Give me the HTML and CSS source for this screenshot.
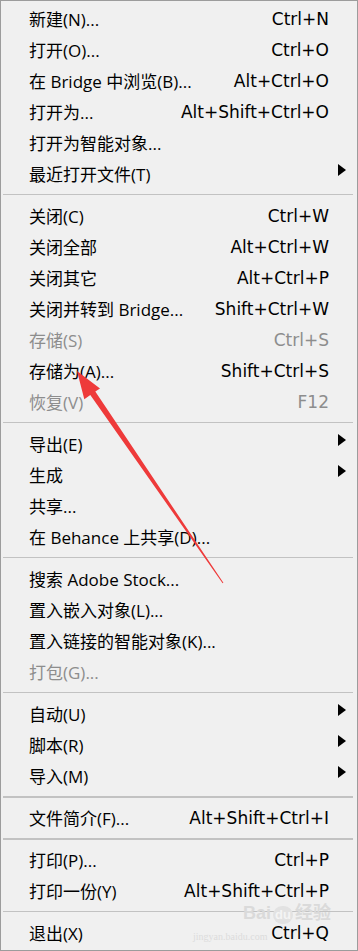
FILE: index.html
```html
<!DOCTYPE html>
<html lang="zh-CN">
<head>
  <meta charset="UTF-8" />
  <meta name="viewport" content="width=device-width, initial-scale=1.0" />
  <title>文件菜单</title>
  <link rel="stylesheet" href="styles.css">
</head>
<body>
  <div class="menu">
    <div class="item"><span class="label">新建(N)...</span><span class="key">Ctrl+N</span></div>
    <div class="item"><span class="label">打开(O)...</span><span class="key">Ctrl+O</span></div>
    <div class="item"><span class="label">在 Bridge 中浏览(B)...</span><span class="key">Alt+Ctrl+O</span></div>
    <div class="item"><span class="label">打开为...</span><span class="key">Alt+Shift+Ctrl+O</span></div>
    <div class="item"><span class="label">打开为智能对象...</span></div>
    <div class="item"><span class="label">最近打开文件(T)</span><span class="sub"><i class="tri"></i></span></div>
    <div class="sep"></div>

    <div class="item"><span class="label">关闭(C)</span><span class="key">Ctrl+W</span></div>
    <div class="item"><span class="label">关闭全部</span><span class="key">Alt+Ctrl+W</span></div>
    <div class="item"><span class="label">关闭其它</span><span class="key">Alt+Ctrl+P</span></div>
    <div class="item"><span class="label">关闭并转到 Bridge...</span><span class="key">Shift+Ctrl+W</span></div>
    <div class="item off"><span class="label">存储(S)</span><span class="key">Ctrl+S</span></div>
    <div class="item"><span class="label">存储为(A)...</span><span class="key">Shift+Ctrl+S</span></div>
    <div class="item off"><span class="label">恢复(V)</span><span class="key">F12</span></div>
    <div class="sep"></div>

    <div class="item"><span class="label">导出(E)</span><span class="sub"><i class="tri"></i></span></div>
    <div class="item"><span class="label">生成</span><span class="sub"><i class="tri"></i></span></div>
    <div class="item"><span class="label">共享...</span></div>
    <div class="item"><span class="label">在 Behance 上共享(D)...</span></div>
    <div class="sep"></div>

    <div class="item"><span class="label">搜索 Adobe Stock...</span></div>
    <div class="item"><span class="label">置入嵌入对象(L)...</span></div>
    <div class="item"><span class="label">置入链接的智能对象(K)...</span></div>
    <div class="item off"><span class="label">打包(G)...</span></div>
    <div class="sep"></div>

    <div class="item"><span class="label">自动(U)</span><span class="sub"><i class="tri"></i></span></div>
    <div class="item"><span class="label">脚本(R)</span><span class="sub"><i class="tri"></i></span></div>
    <div class="item"><span class="label">导入(M)</span><span class="sub"><i class="tri"></i></span></div>
    <div class="sep thick"></div>

    <div class="item"><span class="label">文件简介(F)...</span><span class="key">Alt+Shift+Ctrl+I</span></div>
    <div class="sep thick"></div>

    <div class="item"><span class="label">打印(P)...</span><span class="key">Ctrl+P</span></div>
    <div class="item"><span class="label">打印一份(Y)</span><span class="key">Alt+Shift+Ctrl+P</span></div>
    <div class="sep"></div>

    <div class="item"><span class="label">退出(X)</span><span class="key">Ctrl+Q</span></div>

    <!-- annotation arrow drawn over the menu -->
    <svg class="pointer" width="358" height="951" viewBox="0 0 358 951">
      <polygon points="77,371 100,388.5 95.3,391.6 223.4,582.7 222.6,583.3 90.3,395 84.3,399.2" fill="#ee3a3a"/>
    </svg>

    <div class="mark">
      <span class="mark-top">Bai<b class="paw">du</b>经验</span>
    </div>
    <span class="mark-url">jingyan.baidu.com</span>
  </div>
</body>
</html>
```

FILE: styles.css
```css
html, body {
  margin: 0;
  background: #f0f0f0;
}
.menu {
  position: relative;
  box-sizing: border-box;
  width: 358px;
  height: 951px;
  padding: 2px 0 2px;
  border: 1px solid #9c9c9c;
  background: #f0f0f0;
  color: #000;
  font-family: "Open Sans", "Noto Sans CJK SC", sans-serif;
  font-size: 17px;
  overflow: hidden;
}
.item {
  display: grid;
  grid-template-columns: 1fr auto 28px;
  align-items: center;
  height: 31px;
  padding-left: 28px;
  white-space: nowrap;
}
.label { grid-column: 1; }
.key {
  grid-column: 2;
  font-family: "DejaVu Sans", sans-serif;
  font-size: 17px;
}
.sub {
  grid-column: 3;
  display: flex;
  align-items: center;
  padding-left: 9px;
  margin-bottom: 8px;
}
.tri {
  width: 0;
  height: 0;
  border-top: 6px solid transparent;
  border-bottom: 6px solid transparent;
  border-left: 8px solid #000;
}
.off { color: #8d8d8d; }
.sep {
  height: 1px;
  margin: 5px 4px 5px 2px;
  background: #c2c2c2;
}
.sep.thick {
  height: 2px;
  margin-bottom: 4px;
}
.pointer {
  position: absolute;
  left: -1px;
  top: -1px;
  pointer-events: none;
}
.mark {
  position: absolute;
  right: 26px;
  top: 902px;
  color: #dadada;
  font-family: "Liberation Sans", "Noto Sans CJK SC", sans-serif;
  pointer-events: none;
}
.mark-top {
  font-size: 18px;
  font-weight: bold;
  line-height: 21px;
}
.paw {
  display: inline-block;
  margin: 0 2px;
  padding: 0 2px;
  border-radius: 9px;
  background: #e2e2e2;
  color: #f4f4f4;
  font-size: 13px;
  line-height: 18px;
}
.mark-url {
  position: absolute;
  left: 192px;
  top: 930px;
  color: #dcdcdc;
  font-family: "Liberation Serif", serif;
  font-size: 10px;
  line-height: 12px;
  pointer-events: none;
}
```
